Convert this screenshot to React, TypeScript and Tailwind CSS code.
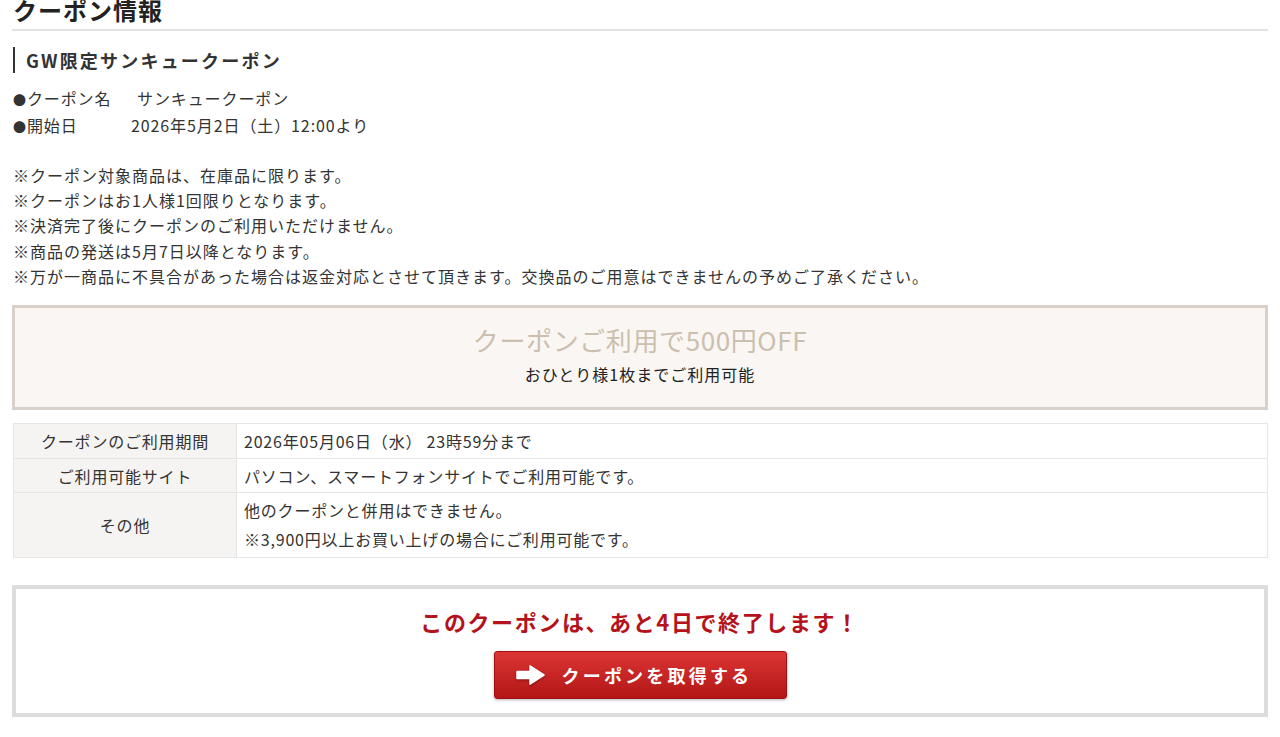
import React from "react";

const font = { fontFamily: '"Noto Sans CJK JP", "Noto Sans", sans-serif' };

function Arrow() {
  return (
    <svg width="29" height="20" viewBox="0 0 29 20" className="drop-shadow-[0_1px_1px_rgba(0,0,0,0.35)]">
      <path d="M1 6.5 H14 V1 L28 10 L14 19 V13.5 H1 Z" fill="#fff" stroke="#fff" strokeWidth="1.5" strokeLinejoin="round" />
    </svg>
  );
}

export default function App() {
  const notes = [
    "※クーポン対象商品は、在庫品に限ります。",
    "※クーポンはお1人様1回限りとなります。",
    "※決済完了後にクーポンのご利用いただけません。",
    "※商品の発送は5月7日以降となります。",
    "※万が一商品に不具合があった場合は返金対応とさせて頂きます。交換品のご用意はできませんの予めご了承ください。",
  ];
  return (
    <div className="w-[1280px] h-[737px] overflow-hidden bg-white text-[#333]" style={font}>
      <div className="pl-[12px] pr-[12px]">
        <div className="-mt-[2px] pb-[7px] border-b-2 border-[#e2e2e2] pl-[1px] text-[24px] leading-[24px] font-bold tracking-[1px] text-[#222]">
          クーポン情報
        </div>

        <div className="mt-[16px] ml-[1px] border-l-2 border-[#333] pl-[11px] text-[18px] leading-[26px] font-bold tracking-[2.2px] text-[#333]">
          GW限定サンキュークーポン
        </div>

        <div className="mt-[12px] text-[16px] leading-[27px] tracking-[0.9px]">
          <div className="flex h-[27px] items-center">
            <span className="w-[125px] pl-[1px]">
              <span className="text-[13px] leading-none">●</span>クーポン名
            </span>
            <span>サンキュークーポン</span>
          </div>
          <div className="flex h-[27px] items-center">
            <span className="w-[119px] pl-[1px]">
              <span className="text-[13px] leading-none">●</span>開始日
            </span>
            <span>2026年5月2日（土）12:00より</span>
          </div>
        </div>

        <div className="mt-[24px] pl-[1px] text-[16px] leading-[25.2px] tracking-[1px]">
          {notes.map((n) => (
            <div key={n}>{n}</div>
          ))}
        </div>

        <div className="mt-[16px] h-[105px] border-[3px] border-[#d9d0ca] bg-[#faf6f3] text-center">
          <div className="pt-[16px] text-[26px] leading-[32px] tracking-[0.6px] text-[#cbbfae]">
            クーポンご利用で500円OFF
          </div>
          <div className="mt-[6px] text-[16px] leading-[24px] tracking-[1px] text-[#222]">
            おひとり様1枚までご利用可能
          </div>
        </div>

        <table className="mt-[13px] ml-[1px] w-[1255px] border-collapse text-[16px] tracking-[0.8px]">
          <tbody>
            <tr className="h-[35px]">
              <td className="w-[223px] border border-[#e6e6e6] bg-[#f6f4f2] text-center">クーポンのご利用期間</td>
              <td className="border border-[#e6e6e6] pl-[7px]">2026年05月06日（水） 23時59分まで</td>
            </tr>
            <tr className="h-[34px]">
              <td className="border border-[#e6e6e6] bg-[#f6f4f2] text-center">ご利用可能サイト</td>
              <td className="border border-[#e6e6e6] pl-[7px]">パソコン、スマートフォンサイトでご利用可能です。</td>
            </tr>
            <tr className="h-[65px]">
              <td className="border border-[#e6e6e6] bg-[#f6f4f2] text-center">その他</td>
              <td className="border border-[#e6e6e6] pl-[7px] leading-[29px]">
                <div>他のクーポンと併用はできません。</div>
                <div>※3,900円以上お買い上げの場合にご利用可能です。</div>
              </td>
            </tr>
          </tbody>
        </table>

        <div className="mt-[27px] h-[132px] border-[4px] border-[#dcdcdc] bg-white flex flex-col items-center">
          <div className="pt-[17px] text-[22px] leading-[30px] font-bold tracking-[1.6px] text-[#b5121b]">
            このクーポンは、あと4日で終了します！
          </div>
          <button className="mt-[15px] h-[48px] w-[293px] rounded-[3px] border border-[#a50f12] bg-gradient-to-b from-[#dc3434] to-[#b21515] shadow-[0_1px_3px_rgba(0,0,0,0.3)] flex items-center pl-[21px] gap-[17px]">
            <Arrow />
            <span className="text-[18px] font-bold tracking-[3.2px] text-white" style={font}>
              クーポンを取得する
            </span>
          </button>
        </div>
      </div>
    </div>
  );
}
